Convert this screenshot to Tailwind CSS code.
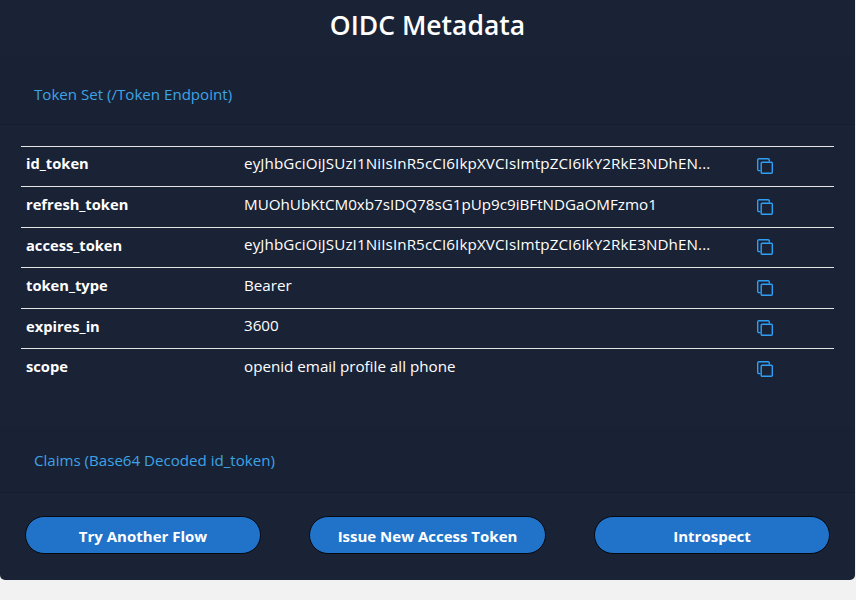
<!DOCTYPE html>
<html lang="en">
<head>
  <meta charset="UTF-8" />
  <title>OIDC Metadata</title>
  <script src="https://cdn.jsdelivr.net/npm/@tailwindcss/browser@4"></script>
</head>
<body class="bg-[#f2f2f2] h-[600px] overflow-hidden font-['Open_Sans',sans-serif]">
  <div class="w-[855px] h-[580px] bg-[#1a2336] rounded-b-[5px] flex flex-col">
    <h1 class="h-[55px] pb-[4px] flex items-center justify-center text-white text-[26.5px] font-semibold">OIDC Metadata</h1>
    <div class="h-[70px] pt-[10px] bg-[#192234] border-b border-[#161e2e] flex items-center pl-[34px] text-[#3ea2e6] text-[15.1px]">Token Set (/Token Endpoint)</div>
    <table class="ml-[21px] mt-[20.9px] w-[813px] text-white text-[15.2px] table-fixed border-collapse">
      <tbody>
        <tr class="h-[40.5px] border-t border-[#e5e5e5]">
          <td class="w-[223px] pl-[5px] pb-[7px] font-bold text-[14.7px]">id_token</td>
          <td class="w-[513px] pb-[6px] tracking-[0.1px]">eyJhbGciOiJSUzI1NiIsInR5cCI6IkpXVCIsImtpZCI6IkY2RkE3NDhEN...</td>
          <td><svg class="w-[16px] h-[16px] mb-[1px]" viewBox="0 0 16 16" fill="none" stroke="#2f9ff6" stroke-width="1.4"><path d="M3.5 12.6H2a1.3 1.3 0 0 1-1.3-1.3V2A1.3 1.3 0 0 1 2 .7h9a1.3 1.3 0 0 1 1.3 1.3v1.5"/><rect x="4.2" y="4.2" width="11.1" height="11.1" rx="1"/></svg></td>
        </tr>
        <tr class="h-[40.5px] border-t border-[#e5e5e5]">
          <td class="pl-[5px] pb-[6px] font-bold text-[14.7px]">refresh_token</td>
          <td class="pb-[6px]">MUOhUbKtCM0xb7sIDQ78sG1pUp9c9iBFtNDGaOMFzmo1</td>
          <td><svg class="w-[16px] h-[16px] mb-[1px]" viewBox="0 0 16 16" fill="none" stroke="#2f9ff6" stroke-width="1.4"><path d="M3.5 12.6H2a1.3 1.3 0 0 1-1.3-1.3V2A1.3 1.3 0 0 1 2 .7h9a1.3 1.3 0 0 1 1.3 1.3v1.5"/><rect x="4.2" y="4.2" width="11.1" height="11.1" rx="1"/></svg></td>
        </tr>
        <tr class="h-[40.5px] border-t border-[#e5e5e5]">
          <td class="pl-[5px] pb-[6px] font-bold text-[14.7px]">access_token</td>
          <td class="pb-[6px] tracking-[0.1px]">eyJhbGciOiJSUzI1NiIsInR5cCI6IkpXVCIsImtpZCI6IkY2RkE3NDhEN...</td>
          <td><svg class="w-[16px] h-[16px] mb-[1px]" viewBox="0 0 16 16" fill="none" stroke="#2f9ff6" stroke-width="1.4"><path d="M3.5 12.6H2a1.3 1.3 0 0 1-1.3-1.3V2A1.3 1.3 0 0 1 2 .7h9a1.3 1.3 0 0 1 1.3 1.3v1.5"/><rect x="4.2" y="4.2" width="11.1" height="11.1" rx="1"/></svg></td>
        </tr>
        <tr class="h-[40.5px] border-t border-[#e5e5e5]">
          <td class="pl-[5px] pb-[6px] font-bold text-[14.7px]">token_type</td>
          <td class="pb-[6px]">Bearer</td>
          <td><svg class="w-[16px] h-[16px] mb-[1px]" viewBox="0 0 16 16" fill="none" stroke="#2f9ff6" stroke-width="1.4"><path d="M3.5 12.6H2a1.3 1.3 0 0 1-1.3-1.3V2A1.3 1.3 0 0 1 2 .7h9a1.3 1.3 0 0 1 1.3 1.3v1.5"/><rect x="4.2" y="4.2" width="11.1" height="11.1" rx="1"/></svg></td>
        </tr>
        <tr class="h-[40.5px] border-t border-[#e5e5e5]">
          <td class="pl-[5px] pb-[6px] font-bold text-[14.7px]">expires_in</td>
          <td class="pb-[6px]">3600</td>
          <td><svg class="w-[16px] h-[16px] mb-[1px]" viewBox="0 0 16 16" fill="none" stroke="#2f9ff6" stroke-width="1.4"><path d="M3.5 12.6H2a1.3 1.3 0 0 1-1.3-1.3V2A1.3 1.3 0 0 1 2 .7h9a1.3 1.3 0 0 1 1.3 1.3v1.5"/><rect x="4.2" y="4.2" width="11.1" height="11.1" rx="1"/></svg></td>
        </tr>
        <tr class="h-[40.5px] border-t border-[#e5e5e5]">
          <td class="pl-[5px] pb-[6px] font-bold text-[14.7px]">scope</td>
          <td class="pb-[6px]">openid email profile all phone</td>
          <td><svg class="w-[16px] h-[16px] mb-[1px]" viewBox="0 0 16 16" fill="none" stroke="#2f9ff6" stroke-width="1.4"><path d="M3.5 12.6H2a1.3 1.3 0 0 1-1.3-1.3V2A1.3 1.3 0 0 1 2 .7h9a1.3 1.3 0 0 1 1.3 1.3v1.5"/><rect x="4.2" y="4.2" width="11.1" height="11.1" rx="1"/></svg></td>
        </tr>
      </tbody>
    </table>
    <div class="mt-[37px] h-[66.6px] pt-[2.4px] bg-[#192234] border-b border-[#161e2e] flex items-center pl-[34px] text-[#3ea2e6] text-[15.1px]">Claims (Base64 Decoded id_token)</div>
    <div class="flex justify-between px-[25px] mt-[23.4px]">
      <button class="w-[236px] h-[38px] pt-[1px] rounded-full bg-[#2173c9] border border-[#05090f] text-white font-bold text-[15px]">Try Another Flow</button>
      <button class="w-[237px] h-[38px] pt-[1px] rounded-full bg-[#2173c9] border border-[#05090f] text-white font-bold text-[15px]">Issue New Access Token</button>
      <button class="w-[236px] h-[38px] pt-[1px] rounded-full bg-[#2173c9] border border-[#05090f] text-white font-bold text-[15px]">Introspect</button>
    </div>
  </div>
</body>
</html>
